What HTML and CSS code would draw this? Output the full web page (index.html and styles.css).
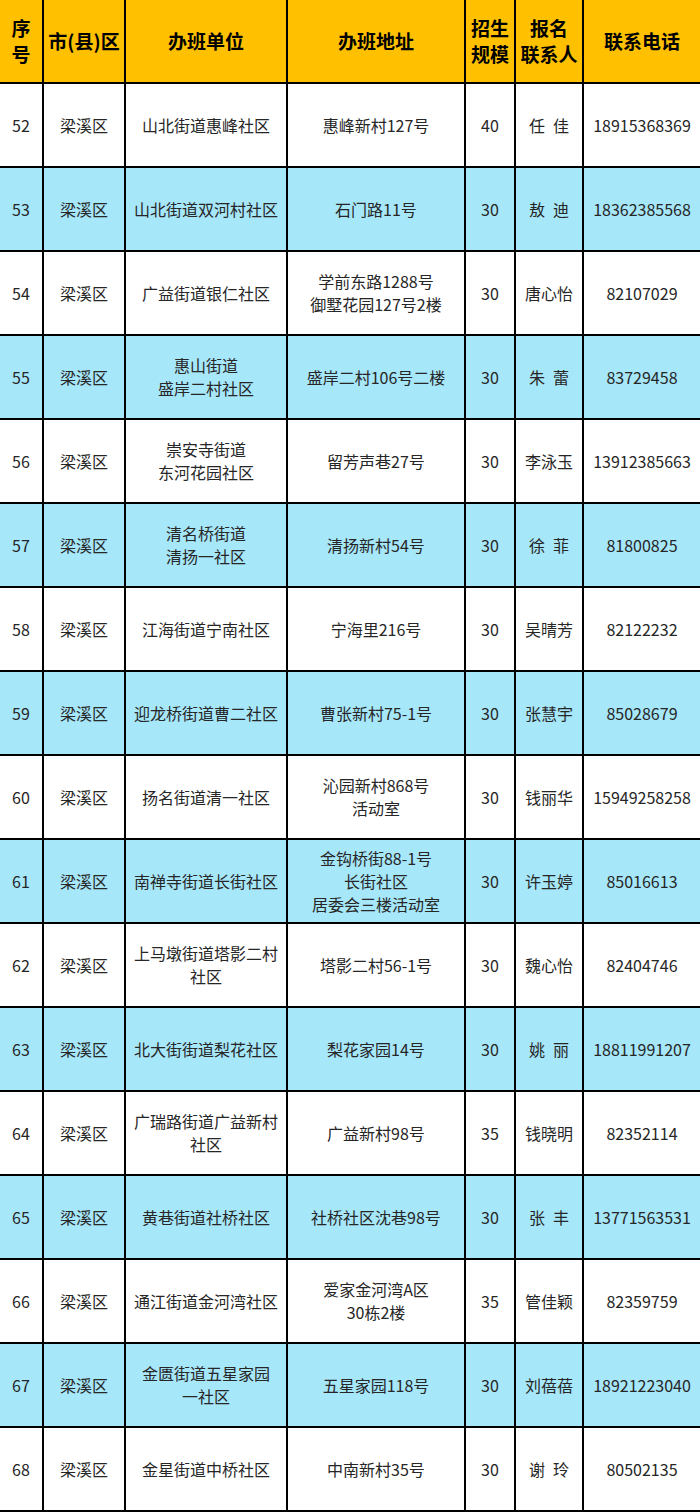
FILE: index.html
```html
<!DOCTYPE html>
<html lang="zh-CN">
<head>
<meta charset="utf-8">
<title>办班信息表</title>
<link rel="stylesheet" href="styles.css">
</head>
<body>
<table class="roster">
  <colgroup>
    <col class="c-no"><col class="c-area"><col class="c-unit"><col class="c-addr"><col class="c-size"><col class="c-contact"><col class="c-phone">
  </colgroup>
  <thead>
    <tr>
      <th>序<br>号</th>
      <th>市(县)区</th>
      <th>办班单位</th>
      <th>办班地址</th>
      <th>招生<br>规模</th>
      <th>报名<br>联系人</th>
      <th>联系电话</th>
    </tr>
  </thead>
  <tbody>
    <tr><td>52</td><td>梁溪区</td><td>山北街道惠峰社区</td><td>惠峰新村127号</td><td>40</td><td>任&ensp;佳</td><td>18915368369</td></tr>
    <tr class="alt"><td>53</td><td>梁溪区</td><td>山北街道双河村社区</td><td>石门路11号</td><td>30</td><td>敖&ensp;迪</td><td>18362385568</td></tr>
    <tr><td>54</td><td>梁溪区</td><td>广益街道银仁社区</td><td>学前东路1288号<br>御墅花园127号2楼</td><td>30</td><td>唐心怡</td><td>82107029</td></tr>
    <tr class="alt"><td>55</td><td>梁溪区</td><td>惠山街道<br>盛岸二村社区</td><td>盛岸二村106号二楼</td><td>30</td><td>朱&ensp;蕾</td><td>83729458</td></tr>
    <tr><td>56</td><td>梁溪区</td><td>崇安寺街道<br>东河花园社区</td><td>留芳声巷27号</td><td>30</td><td>李泳玉</td><td>13912385663</td></tr>
    <tr class="alt"><td>57</td><td>梁溪区</td><td>清名桥街道<br>清扬一社区</td><td>清扬新村54号</td><td>30</td><td>徐&ensp;菲</td><td>81800825</td></tr>
    <tr><td>58</td><td>梁溪区</td><td>江海街道宁南社区</td><td>宁海里216号</td><td>30</td><td>吴晴芳</td><td>82122232</td></tr>
    <tr class="alt"><td>59</td><td>梁溪区</td><td>迎龙桥街道曹二社区</td><td>曹张新村75-1号</td><td>30</td><td>张慧宇</td><td>85028679</td></tr>
    <tr><td>60</td><td>梁溪区</td><td>扬名街道清一社区</td><td>沁园新村868号<br>活动室</td><td>30</td><td>钱丽华</td><td>15949258258</td></tr>
    <tr class="alt"><td>61</td><td>梁溪区</td><td>南禅寺街道长街社区</td><td>金钩桥街88-1号<br>长街社区<br>居委会三楼活动室</td><td>30</td><td>许玉婷</td><td>85016613</td></tr>
    <tr><td>62</td><td>梁溪区</td><td>上马墩街道塔影二村<br>社区</td><td>塔影二村56-1号</td><td>30</td><td>魏心怡</td><td>82404746</td></tr>
    <tr class="alt"><td>63</td><td>梁溪区</td><td>北大街街道梨花社区</td><td>梨花家园14号</td><td>30</td><td>姚&ensp;丽</td><td>18811991207</td></tr>
    <tr><td>64</td><td>梁溪区</td><td>广瑞路街道广益新村<br>社区</td><td>广益新村98号</td><td>35</td><td>钱晓明</td><td>82352114</td></tr>
    <tr class="alt"><td>65</td><td>梁溪区</td><td>黄巷街道社桥社区</td><td>社桥社区沈巷98号</td><td>30</td><td>张&ensp;丰</td><td>13771563531</td></tr>
    <tr><td>66</td><td>梁溪区</td><td>通江街道金河湾社区</td><td>爱家金河湾A区<br>30栋2楼</td><td>35</td><td>管佳颖</td><td>82359759</td></tr>
    <tr class="alt"><td>67</td><td>梁溪区</td><td>金匮街道五星家园<br>一社区</td><td>五星家园118号</td><td>30</td><td>刘蓓蓓</td><td>18921223040</td></tr>
    <tr><td>68</td><td>梁溪区</td><td>金星街道中桥社区</td><td>中南新村35号</td><td>30</td><td>谢&ensp;玲</td><td>80502135</td></tr>
  </tbody>
</table>
</body>
</html>
```

FILE: styles.css
```css
html, body {
  margin: 0;
  padding: 0;
  background: #ffffff;
}

body {
  width: 700px;
  overflow: hidden;
}

.roster {
  table-layout: fixed;
  width: 704px;
  margin: -2px -2px 0 -2px;
  border-collapse: separate;
  border-spacing: 2px;
  background: #000000;
  font-family: "Noto Sans CJK SC", "Noto Sans", sans-serif;
  color: #262626;
}

.c-no { width: 42px; }
.c-area { width: 80px; }
.c-unit { width: 160px; }
.c-addr { width: 176px; }
.c-size { width: 48px; }
.c-contact { width: 66px; }
.c-phone { width: 116px; }

.roster th,
.roster td {
  padding: 0;
  text-align: center;
  vertical-align: middle;
  white-space: nowrap;
  overflow: hidden;
}

.roster th {
  height: 82px;
  background: #ffc000;
  color: #000000;
  font-size: 19px;
  font-weight: 700;
  line-height: 26px;
}

.roster td {
  height: 82px;
  background: #ffffff;
  font-size: 16px;
  line-height: 23px;
}

.roster tr.alt td {
  background: #a6e7fa;
}
```
